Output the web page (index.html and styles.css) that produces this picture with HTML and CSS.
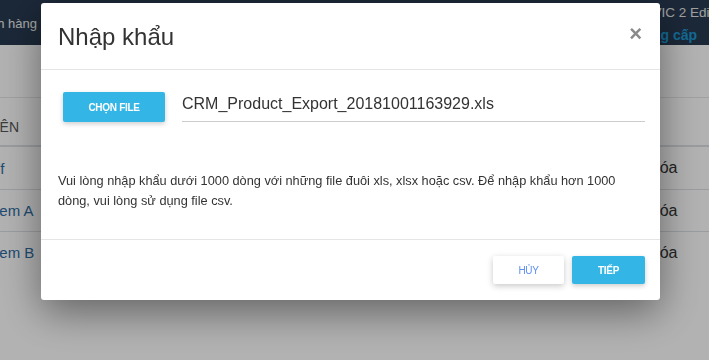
FILE: index.html
```html
<!DOCTYPE html>
<html lang="vi">
<head>
    <meta charset="UTF-8">
    <meta name="viewport" content="width=device-width, initial-scale=1.0">
    <title>Nhập khẩu</title>
    <link rel="stylesheet" href="styles.css">
</head>
<body>
    <div class="topbar">
        <div class="nav-left">Khách hàng</div>
        <div class="nav-right">
            <div class="edition">CRM VIC 2 Edition</div>
            <div class="upgrade">Nâng cấp</div>
        </div>
    </div>

    <div class="page">
        <div class="row head">
            <div class="col-name">TÊN</div>
            <div class="col-action"></div>
        </div>
        <div class="row">
            <div class="col-name link">Tf</div>
            <div class="col-action">Xóa</div>
        </div>
        <div class="row">
            <div class="col-name link">Item A</div>
            <div class="col-action">Xóa</div>
        </div>
        <div class="row">
            <div class="col-name link">Item B</div>
            <div class="col-action">Xóa</div>
        </div>
    </div>

    <div class="overlay">
        <div class="modal">
            <div class="modal-header">
                <h3>Nhập khẩu</h3>
                <span class="close">&times;</span>
            </div>
            <div class="modal-body">
                <div class="file-row">
                    <button class="btn btn-primary btn-file">CHỌN FILE</button>
                    <div class="file-name">CRM_Product_Export_20181001163929.xls</div>
                </div>
                <p class="note">Vui lòng nhập khẩu dưới 1000 dòng với những file đuôi xls, xlsx hoặc csv. Để nhập khẩu hơn 1000 dòng, vui lòng sử dụng file csv.</p>
            </div>
            <div class="modal-footer">
                <button class="btn btn-default">HỦY</button>
                <button class="btn btn-primary">TIẾP</button>
            </div>
        </div>
    </div>
</body>
</html>
```

FILE: styles.css
```css
* {
    margin: 0;
    padding: 0;
    box-sizing: border-box;
}

body {
    font-family: 'Liberation Sans', Arial, sans-serif;
    background: #fff;
    color: #333;
    width: 709px;
    height: 360px;
    overflow: hidden;
}

.topbar {
    height: 45px;
    background: #283a51;
    display: flex;
    justify-content: space-between;
}

.nav-left {
    color: #f0f0f0;
    font-size: 13px;
    width: 37px;
    white-space: nowrap;
    direction: rtl;
    text-align: right;
    line-height: 48px;
}

.nav-right {
    width: 49px;
    white-space: nowrap;
    overflow: hidden;
    padding-top: 5px;
}

.edition {
    color: #e6e6e6;
    font-size: 13.5px;
    line-height: 16px;
    margin-left: -42px;
}

.upgrade {
    color: #1b9ad6;
    font-size: 14px;
    font-weight: bold;
    line-height: 28px;
    margin-left: -26px;
}

.page {
    padding-top: 52px;
    margin-left: -9px;
}

.row {
    display: flex;
    justify-content: space-between;
    height: 42px;
    border-top: 1px solid #dde1e5;
    align-items: center;
    font-size: 15px;
}

.row.head {
    height: 50px;
    padding-top: 10px;
    font-size: 14px;
    color: #555;
    border-top: 1px solid #e7e7e7;
    border-bottom: 2px solid #dde1e5;
}

.row.head + .row {
    border-top: 0;
}

.link {
    color: #2d6ca2;
}

.col-action {
    width: 60px;
    color: #333;
    font-size: 16px;
}

.overlay {
    position: fixed;
    inset: 0;
    background: rgba(0, 0, 0, 0.3);
    padding: 3px 0 0 41px;
}

.modal {
    width: 619px;
    background: #fff;
    border-radius: 3px;
    box-shadow: 0 12px 40px rgba(0, 0, 0, 0.45);
}

.modal-header {
    height: 67px;
    padding: 0 17px;
    display: flex;
    align-items: center;
    justify-content: space-between;
    border-bottom: 1px solid #e5e5e5;
}

.modal-header h3 {
    font-weight: normal;
    font-size: 24px;
    color: #333;
    padding-top: 2px;
}

.close {
    font-size: 22px;
    font-weight: bold;
    color: #8a8a8a;
    padding-right: 1px;
    margin-top: -4px;
}

.modal-body {
    padding: 22px 15px 28px 17px;
}

.file-row {
    display: flex;
    align-items: flex-start;
    margin-left: 5px;
}

.btn {
    border: none;
    border-radius: 2px;
    font-family: 'Liberation Sans', Arial, sans-serif;
    font-size: 10px;
    font-weight: bold;
    height: 28px;
    cursor: pointer;
    letter-spacing: -0.3px;
}

.btn-primary {
    background: #33b5e5;
    color: #fff;
    box-shadow: 0 2px 5px rgba(0, 0, 0, 0.2);
}

.btn-default {
    background: #fff;
    color: #5f8ff0;
    font-weight: normal;
    box-shadow: 0 2px 6px rgba(0, 0, 0, 0.22);
}

.btn-file {
    width: 102px;
    height: 30px;
    flex-shrink: 0;
}

.file-name {
    flex: 1;
    margin-left: 17px;
    height: 30px;
    font-size: 16px;
    line-height: 24px;
    border-bottom: 1px solid #ccc;
    color: #333;
}

.note {
    margin-top: 49px;
    font-size: 12.75px;
    line-height: 20px;
    color: #333;
    padding-right: 15px;
}

.modal-footer {
    border-top: 1px solid #e5e5e5;
    height: 61px;
    padding: 16px 15px 0 0;
    display: flex;
    justify-content: flex-end;
    gap: 8px;
}

.modal-footer .btn-default {
    width: 71px;
}

.modal-footer .btn-primary {
    width: 73px;
}
```
